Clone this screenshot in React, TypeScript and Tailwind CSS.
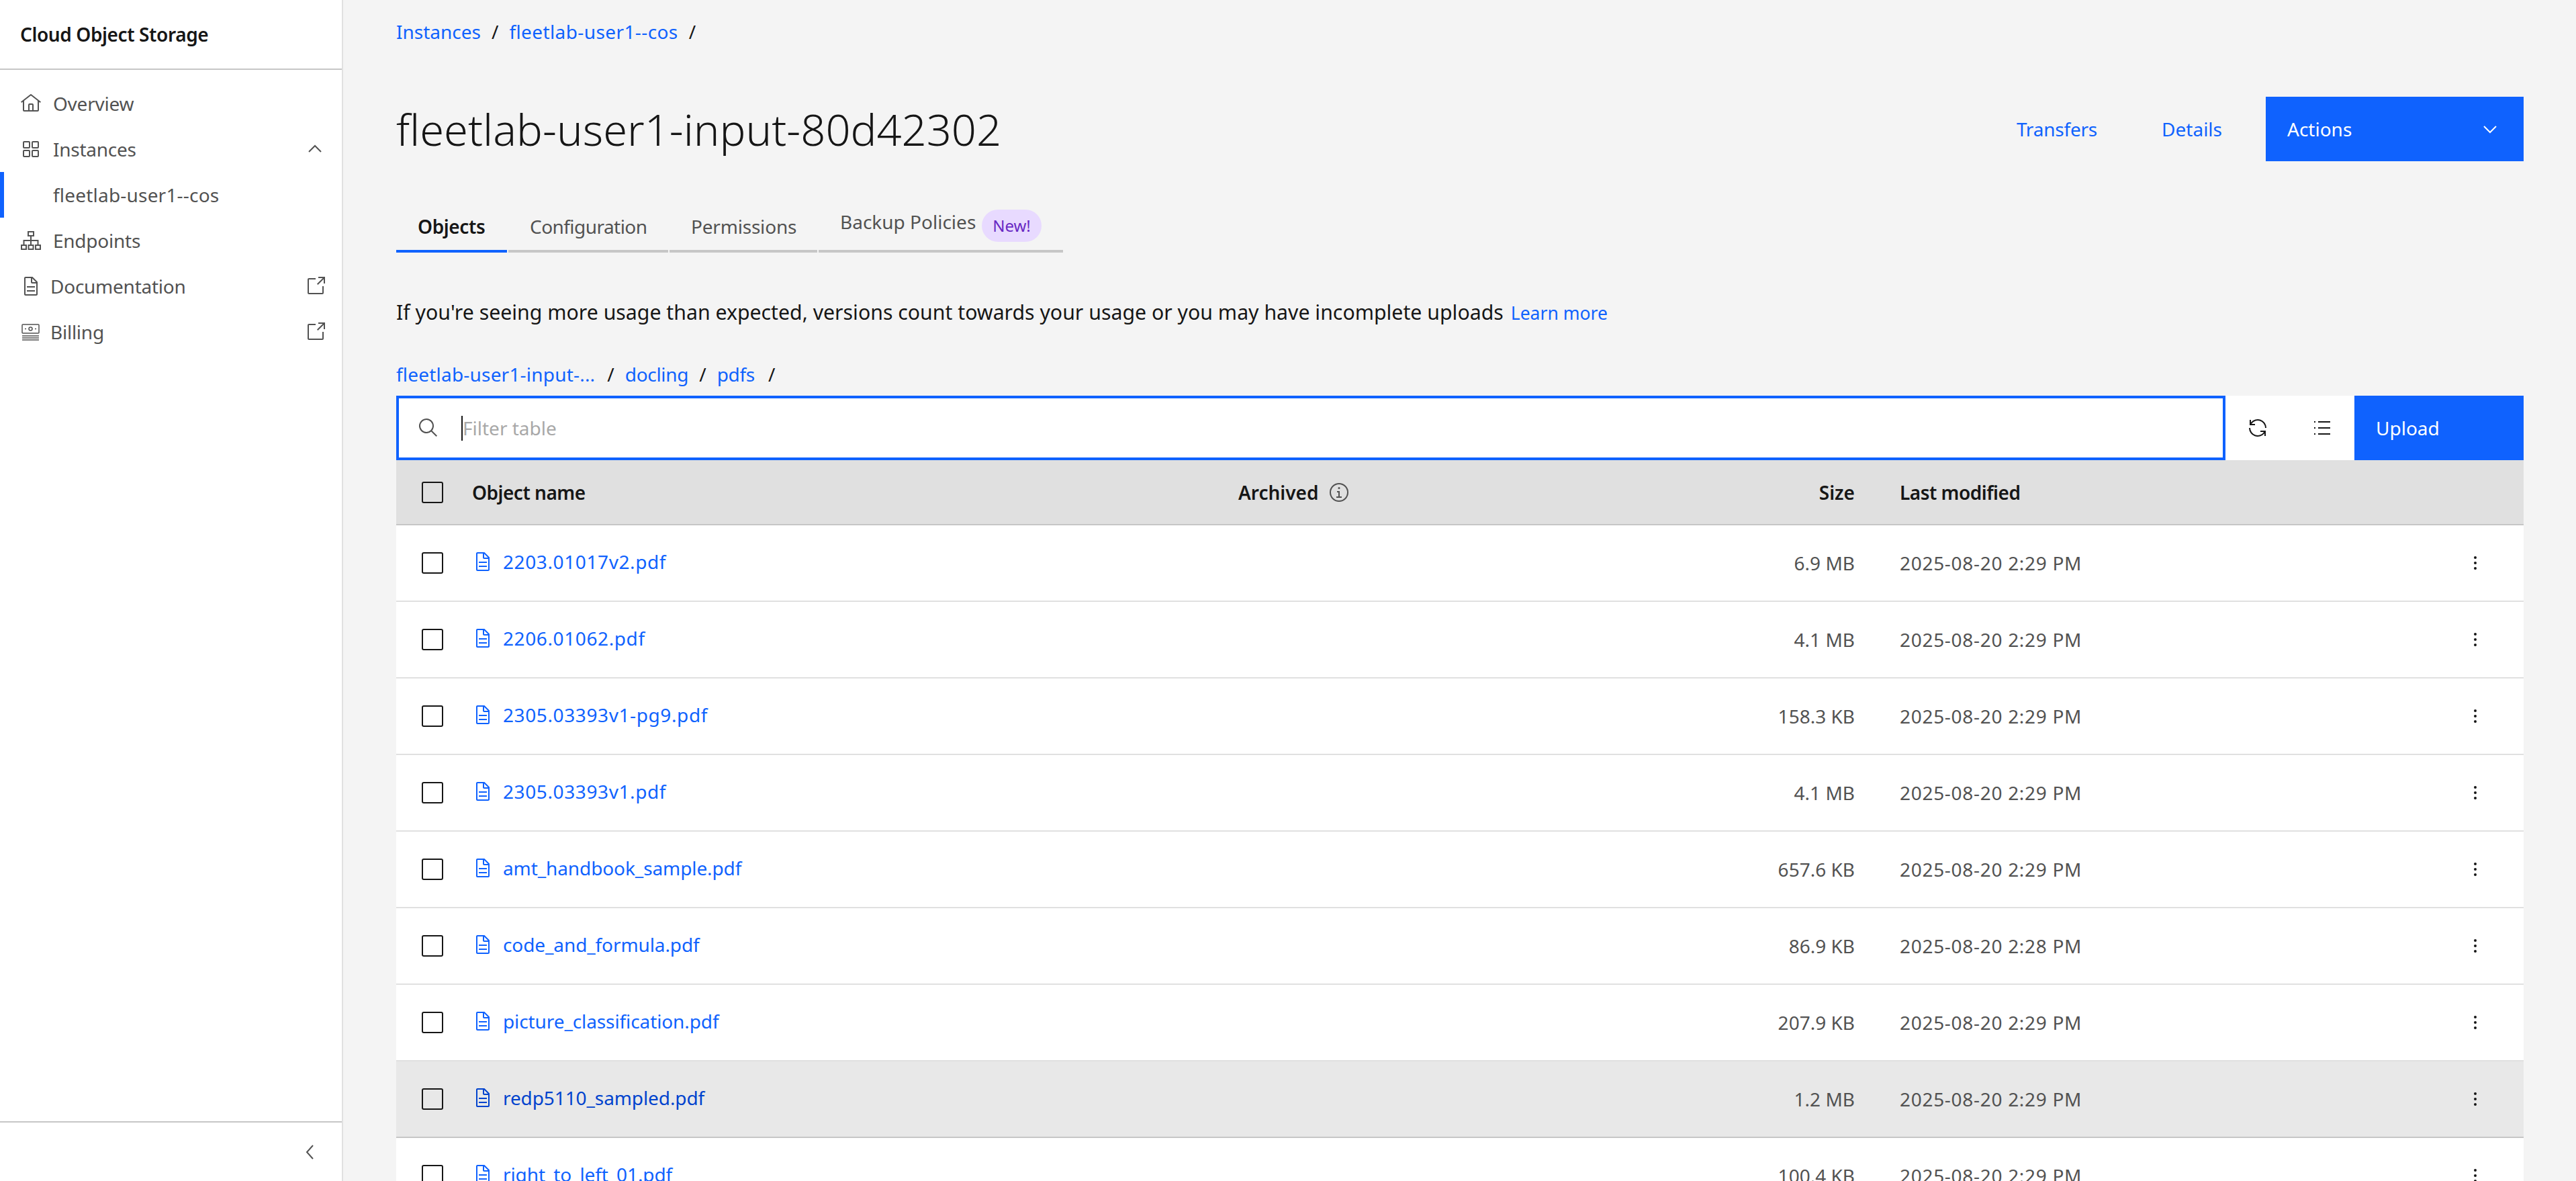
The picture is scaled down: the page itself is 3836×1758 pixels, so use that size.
import React from "react";

const rows = [
  { name: "2203.01017v2.pdf", size: "6.9 MB", date: "2025-08-20 2:29 PM", digits: true },
  { name: "2206.01062.pdf", size: "4.1 MB", date: "2025-08-20 2:29 PM", digits: true },
  { name: "2305.03393v1-pg9.pdf", size: "158.3 KB", date: "2025-08-20 2:29 PM", digits: true },
  { name: "2305.03393v1.pdf", size: "4.1 MB", date: "2025-08-20 2:29 PM", digits: true },
  { name: "amt_handbook_sample.pdf", size: "657.6 KB", date: "2025-08-20 2:29 PM" },
  { name: "code_and_formula.pdf", size: "86.9 KB", date: "2025-08-20 2:28 PM" },
  { name: "picture_classification.pdf", size: "207.9 KB", date: "2025-08-20 2:29 PM" },
  { name: "redp5110_sampled.pdf", size: "1.2 MB", date: "2025-08-20 2:29 PM", hover: true },
  { name: "right_to_left_01.pdf", size: "100.4 KB", date: "2025-08-20 2:29 PM" },
];

const DocIcon = ({ className }: { className: string }) => (
  <svg viewBox="0 0 32 32" fill="currentColor" className={className}>
    <path d="M25.7,9.3l-7-7C18.5,2.1,18.3,2,18,2H8C6.9,2,6,2.9,6,4v24c0,1.1,0.9,2,2,2h16c1.1,0,2-0.9,2-2V10C26,9.7,25.9,9.5,25.7,9.3z M18,4.4l5.6,5.6H18V4.4z M24,28H8V4h8v6c0,1.1,0.9,2,2,2h6V28z" />
    <rect x="10" y="22" width="12" height="2" />
    <rect x="10" y="16" width="12" height="2" />
  </svg>
);

const HomeIcon = () => (
  <svg viewBox="0 0 32 32" fill="currentColor" className="w-8 h-8">
    <path d="M16.6123,2.2138a1.01,1.01,0,0,0-1.2427,0L1,13.4194l1.2427,1.5717L4,13.6209V26a2.0041,2.0041,0,0,0,2,2H26a2.0037,2.0037,0,0,0,2-2V13.63L29.7573,15,31,13.4282ZM18,26H14V18h4Zm2,0V18a2.0023,2.0023,0,0,0-2-2H14a2.002,2.002,0,0,0-2,2v8H6V12.0615l10-7.79,10,7.8005V26Z" />
  </svg>
);

const GridIcon = () => (
  <svg viewBox="0 0 32 32" fill="none" stroke="currentColor" strokeWidth="2" className="w-8 h-8">
    <rect x="5" y="5" width="9" height="9" rx="1" />
    <rect x="18" y="5" width="9" height="9" rx="1" />
    <rect x="5" y="18" width="9" height="9" rx="1" />
    <rect x="18" y="18" width="9" height="9" rx="1" />
  </svg>
);

const TreeIcon = () => (
  <svg viewBox="0 0 32 32" fill="none" stroke="currentColor" strokeWidth="2" className="w-8 h-8">
    <rect x="12" y="3" width="8" height="6" />
    <rect x="2" y="23" width="7" height="6" />
    <rect x="12.5" y="23" width="7" height="6" />
    <rect x="23" y="23" width="7" height="6" />
    <path d="M16 9v14M5.5 23v-7h21v7" />
  </svg>
);

const BillingIcon = () => (
  <svg viewBox="0 0 32 32" fill="none" stroke="currentColor" strokeWidth="1.5" className="w-8 h-8">
    <rect x="3" y="5" width="25" height="13" rx="1" />
    <circle cx="15.5" cy="11.5" r="2.5" />
    <path d="M7 11.5h2M22 11.5h2M3 22h25M3 25h25M3 28h25" />
  </svg>
);

const LaunchIcon = () => (
  <svg viewBox="0 0 32 32" fill="currentColor" className="w-8 h-8">
    <path d="M26,28H6a2.0027,2.0027,0,0,1-2-2V6A2.0027,2.0027,0,0,1,6,4H16V6H6V26H26V16h2V26A2.0027,2.0027,0,0,1,26,28Z" />
    <polygon points="20 2 20 4 26.586 4 18 12.586 19.414 14 28 5.414 28 12 30 12 30 2 20 2" />
  </svg>
);

const Chevron = ({ d, className }: { d: string; className: string }) => (
  <svg viewBox="0 0 32 32" fill="none" stroke="currentColor" strokeWidth="2" className={className}>
    <path d={d} />
  </svg>
);

const Kebab = () => (
  <svg viewBox="0 0 32 32" fill="currentColor" className="w-8 h-8 text-[#161616]">
    <circle cx="16" cy="8" r="2" />
    <circle cx="16" cy="16" r="2" />
    <circle cx="16" cy="24" r="2" />
  </svg>
);

const Checkbox = () => <span className="block w-8 h-8 shrink-0 border-2 border-[#161616] rounded-[3px]" />;

function NavItem({ icon, label, right, tight }: { icon?: React.ReactNode; label: string; right?: React.ReactNode; tight?: boolean }) {
  return (
    <div className="flex items-center h-[68px] pl-[30px] pr-[23px] text-[#525252] tracking-[-0.25px]">
      <span className={tight ? "w-[45px] shrink-0" : "w-[49px] shrink-0"}>{icon}</span>
      <span className="flex-1">{label}</span>
      {right}
    </div>
  );
}

export default function App() {
  return (
    <div className="flex w-full h-[1758px] overflow-hidden bg-[#f4f4f4] text-[#161616] text-[28px] leading-9 font-['Noto_Sans',sans-serif]">
      {/* Side nav */}
      <aside className="flex flex-col w-[511px] shrink-0 bg-white border-r-2 border-[#e0e0e0]">
        <div className="flex items-center h-[104px] pl-[30px] border-b-2 border-[#c6c6c6] font-semibold tracking-[-0.4px]">Cloud Object Storage</div>
        <nav className="pt-[16px]">
          <NavItem icon={<HomeIcon />} label="Overview" />
          <NavItem
            icon={<GridIcon />}
            label="Instances"
            right={<Chevron d="M7 20 L16 11 L25 20" className="w-8 h-8 mr-[1px]" />}
          />
          <div className="flex items-center h-[68px] pl-[73px] border-l-[6px] border-[#0f62fe] text-[#525252] tracking-[0.2px]">fleetlab-user1--cos</div>
          <NavItem icon={<TreeIcon />} label="Endpoints" />
          <NavItem icon={<DocIcon className="w-8 h-8" />} label="Documentation" right={<LaunchIcon />} tight />
          <NavItem icon={<BillingIcon />} label="Billing" right={<LaunchIcon />} tight />
        </nav>
        <div className="mt-auto flex items-center justify-end h-[89px] pr-[31px] border-t-2 border-[#c6c6c6] text-[#525252]">
          <Chevron d="M20 6 L11 16 L20 26" className="w-8 h-8" />
        </div>
      </aside>

      {/* Main */}
      <main className="flex-1 min-w-0 pl-[79px] pr-[78px] pt-[29px]">
        <div className="flex items-center text-[#0f62fe]">
          <span>Instances</span>
          <span className="text-[#161616] mx-[16px]">/</span>
          <span className="tracking-[0.4px]">fleetlab-user1--cos</span>
          <span className="text-[#161616] mx-[16px]">/</span>
        </div>

        <div className="flex items-center justify-between mt-[79px] h-24">
          <h1 className="text-[65px] leading-[80px] font-light">fleetlab-user1-input-80d42302</h1>
          <div className="flex items-center h-24">
            <span className="text-[#0f62fe] tracking-[-0.2px]">Transfers</span>
            <span className="text-[#0f62fe] ml-[96px]">Details</span>
            <div className="flex items-center justify-between w-[384px] h-24 ml-[65px] pl-[32px] pr-[34px] bg-[#0f62fe] text-white">
              <span>Actions</span>
              <Chevron d="M7 12 L16 21 L25 12" className="w-8 h-8" />
            </div>
          </div>
        </div>

        <div className="flex gap-[2px] mt-[48px] text-[#525252]">
          <div className="w-[165px] h-[88px] pl-[32px] pt-[31px] border-b-4 border-[#0f62fe] text-[#161616] font-semibold tracking-[-0.4px]">Objects</div>
          <div className="w-[238px] h-[88px] pl-[32px] pt-[31px] border-b-4 border-[#c6c6c6] tracking-[-0.55px]">Configuration</div>
          <div className="w-[220px] h-[88px] pl-[32px] pt-[31px] border-b-4 border-[#c6c6c6] tracking-[-0.2px]">Permissions</div>
          <div className="flex items-start w-[364px] h-[88px] pl-[32px] pt-[24px] border-b-4 border-[#c6c6c6]">
            <span className="w-[211px]">Backup Policies</span>
            <span className="flex items-center justify-center w-[89px] h-12 rounded-full bg-[#e8daff] text-[#6929c4] text-[24px]">New!</span>
          </div>
        </div>

        <div className="flex items-baseline mt-[67px] text-[30.25px] leading-[44px]">
          If you're seeing more usage than expected, versions count towards your usage or you may have incomplete uploads
          <span className="ml-[11px] text-[26.5px] text-[#0f62fe]">Learn more</span>
        </div>

        <div className="flex items-center mt-[51px] text-[#0f62fe]">
          <span className="tracking-[0.2px]">fleetlab-user1-input-...</span>
          <span className="text-[#161616] ml-[18px] mr-[16px]">/</span>
          <span className="tracking-[-0.3px]">docling</span>
          <span className="text-[#161616] mx-[16px]">/</span>
          <span className="tracking-[-0.3px]">pdfs</span>
          <span className="text-[#161616] mx-[20px]">/</span>
        </div>

        {/* Toolbar */}
        <div className="flex h-24 mt-[14px]">
          <div className="flex items-center flex-1 bg-white border-4 border-[#0f62fe] pl-[28px]">
            <svg viewBox="0 0 32 32" fill="currentColor" className="w-8 h-8 text-[#525252]">
              <path d="M29,27.5859l-7.5521-7.5521a11.0177,11.0177,0,1,0-1.4141,1.4141L27.5859,29ZM4,13a9,9,0,1,1,9,9A9.01,9.01,0,0,1,4,13Z" />
            </svg>
            <span className="w-[2px] h-[37px] ml-[33px] bg-[#161616]" />
            <span className="text-[#a8a8a8]">Filter table</span>
          </div>
          <div className="flex items-center justify-center w-24 bg-white">
            <svg viewBox="0 0 32 32" fill="currentColor" className="w-8 h-8">
              <path d="M12,10H6.78A11,11,0,0,1,27,16h2A13,13,0,0,0,6,7.68V4H4v8h8Z" />
              <path d="M20,22h5.22A11,11,0,0,1,5,16H3a13,13,0,0,0,23,8.32V28h2V20H20Z" />
            </svg>
          </div>
          <div className="flex items-center justify-center w-24 bg-white">
            <svg viewBox="0 0 32 32" fill="currentColor" className="w-8 h-8">
              <rect x="10" y="6" width="18" height="2" />
              <rect x="10" y="15" width="18" height="2" />
              <rect x="10" y="24" width="18" height="2" />
              <rect x="4" y="6" width="2" height="2" />
              <rect x="4" y="15" width="2" height="2" />
              <rect x="4" y="24" width="2" height="2" />
            </svg>
          </div>
          <div className="flex items-center w-[252px] pl-[32px] bg-[#0f62fe] text-white">Upload</div>
        </div>

        {/* Table */}
        <div className="grid grid-cols-[113px_1141px_918px_67px_811px_92px_26px] items-center h-[97px] bg-[#e0e0e0] border-b-2 border-[#c6c6c6] font-semibold">
          <div className="pl-[38px]"><Checkbox /></div>
          <div className="tracking-[-0.5px]">Object name</div>
          <div className="flex items-center gap-[15px] relative">
            <span className="font-semibold">Archived</span>
            <svg viewBox="0 0 32 32" fill="currentColor" className="w-8 h-8 text-[#525252]">
              <polygon points="17 22 17 14 13 14 13 16 15 16 15 22 12 22 12 24 20 24 20 22 17 22" />
              <path d="M16,8a1.5,1.5,0,1,0,1.5,1.5A1.5,1.5,0,0,0,16,8Z" />
              <path d="M16,30A14,14,0,1,1,30,16,14,14,0,0,1,16,30ZM16,4A12,12,0,1,0,28,16,12,12,0,0,0,16,4Z" />
            </svg>
            <span className="absolute right-0">Size</span>
          </div>
          <div />
          <div className="tracking-[-0.5px]">Last modified</div>
          <div />
          <div />
        </div>

        {rows.map((r) => (
          <div
            key={r.name}
            className={
              r.hover
                ? "grid grid-cols-[113px_1141px_918px_67px_811px_92px_26px] items-center h-[114px] bg-[#e8e8e8] border-b-2 border-[#c6c6c6]"
                : "grid grid-cols-[113px_1141px_918px_67px_811px_92px_26px] items-center h-[114px] bg-white border-b-2 border-[#e0e0e0]"
            }
          >
            <div className="pl-[38px]"><Checkbox /></div>
            <div className={r.hover ? "flex items-center gap-[14px] pb-[5px] text-[#0043ce]" : "flex items-center gap-[14px] pb-[5px] text-[#0f62fe]"}>
              <DocIcon className="w-8 h-8" />
              <span className={r.digits ? "tracking-[0.6px]" : "tracking-[-0.1px]"}>{r.name}</span>
            </div>
            <div className="text-right text-[#525252]">{r.size}</div>
            <div />
            <div className="text-[#525252] tracking-[0.7px]">{r.date}</div>
            <div className="flex justify-center"><Kebab /></div>
            <div />
          </div>
        ))}
      </main>
    </div>
  );
}
